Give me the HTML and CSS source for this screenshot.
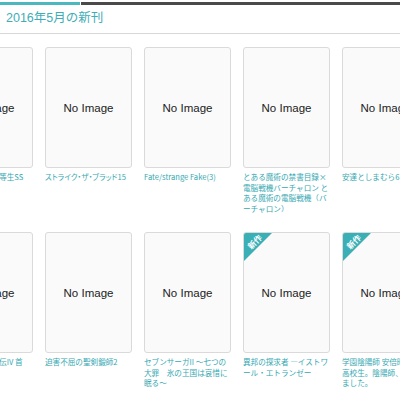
FILE: index.html
```html
<!DOCTYPE html>
<html lang="ja">
<head>
<meta charset="utf-8">
<link rel="stylesheet" href="styles.css">
</head>
<body>
<div class="topbar"><span class="seg-active"></span><span class="seg-rest"></span></div>
<h2 class="section-title">2016年5月の新刊</h2>
<div class="grid">
  <div class="item"><div class="cover">No Image</div><p class="caption">魔法科高校の劣等生SS</p></div>
  <div class="item"><div class="cover">No Image</div><p class="caption caption-prop">ストライク・ザ・ブラッド15</p></div>
  <div class="item"><div class="cover">No Image</div><p class="caption">Fate/strange Fake(3)</p></div>
  <div class="item"><div class="cover">No Image</div><p class="caption">とある魔術の禁書目録×電脳戦機バーチャロン とある魔術の電脳戦機（バーチャロン）</p></div>
  <div class="item"><div class="cover">No Image</div><p class="caption">安達としまむら6</p></div>

  <div class="item"><div class="cover">No Image</div><p class="caption">英雄たちのアル伝IV 首</p></div>
  <div class="item"><div class="cover">No Image</div><p class="caption">迫害不屈の聖剣鍛師2</p></div>
  <div class="item"><div class="cover">No Image</div><p class="caption">セブンサーガII ～七つの大罪　氷の王国は哀惜に眠る～</p></div>
  <div class="item"><div class="cover"><span class="badge"><span class="badge-text">新作</span></span>No Image</div><p class="caption">異邦の探求者 ―イストワール・エトランゼー</p></div>
  <div class="item"><div class="cover"><span class="badge"><span class="badge-text">新作</span></span>No Image</div><p class="caption">学園陰陽師 安倍晴明は、高校生。陰陽師、引退しました。</p></div>
</div>
</body>
</html>
```

FILE: styles.css
```css
html, body {
  margin: 0;
  padding: 0;
  overflow: hidden;
  background: #ffffff;
}
body {
  font-family: "Liberation Sans", "Noto Sans CJK JP", sans-serif;
}
.topbar {
  display: flex;
  height: 3px;
  margin-top: 2px;
}
.seg-active {
  width: 80px;
  background: #4bb8c0;
}
.seg-rest {
  flex: 1;
  margin-left: 1px;
  background: #4a4a4a;
}
.section-title {
  margin: 0;
  padding: 5px 6px 7px;
  font-size: 12.5px;
  line-height: 16px;
  font-weight: normal;
  color: #3fadb6;
  border-bottom: 1px solid #d8d8d8;
}
.grid {
  display: grid;
  grid-template-columns: repeat(5, 87px);
  grid-auto-rows: 185px;
  column-gap: 12px;
  margin: 13px 0 0 -54px;
}
.item {
  min-width: 0;
}
.cover {
  position: relative;
  box-sizing: border-box;
  height: 121px;
  border: 1px solid #dadada;
  border-radius: 3px;
  background: #fafafa;
  display: flex;
  align-items: center;
  justify-content: center;
  font-size: 11.5px;
  color: #222;
  overflow: hidden;
}
.caption {
  margin: 4px 0 0;
  font-family: "Noto Sans CJK JP", sans-serif;
  font-size: 7.6px;
  line-height: 10.5px;
  color: #36a8b2;
}
.caption-prop {
  font-feature-settings: "palt";
}
.badge {
  position: absolute;
  top: -1px;
  left: -1px;
  width: 30px;
  height: 30px;
  background: #3ab0b6;
  clip-path: polygon(0 0, 100% 0, 0 100%);
}
.badge-text {
  position: absolute;
  top: 5px;
  left: 0px;
  width: 23px;
  text-align: center;
  font-family: "Noto Sans CJK JP", sans-serif;
  font-size: 8px;
  line-height: 9px;
  font-weight: bold;
  color: #ffffff;
  transform: rotate(-45deg);
}
```
